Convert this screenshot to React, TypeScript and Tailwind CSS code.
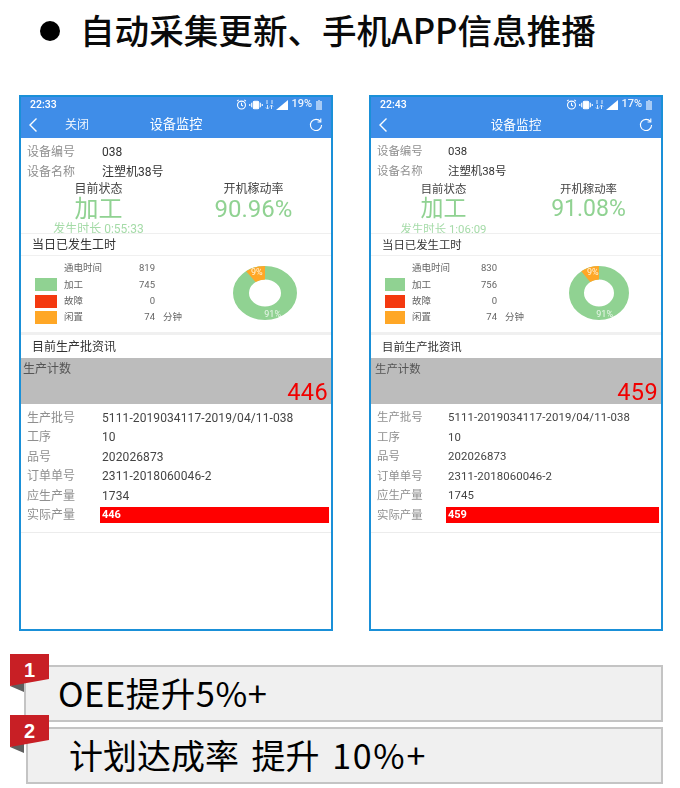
const font = "font-['Roboto','Noto_Sans_CJK_SC',sans-serif]";

type P = {
  time: string; battery: string; close: boolean; dur: string; rate: string;
  power: string; work: string; idle: string; count: string; batch: string; part: string; order: string; plan: string;
  wrap: string; sm: string; big: string; labelW: string; swatch: string; nameW: string; valW: string; chart: string; donut: string; title: string; countPad: string;
};

const a: P = {
  time: '22:33', battery: '19%', close: true, dur: '发生时长 0:55:33', rate: '90.96%',
  power: '819', work: '745', idle: '74', count: '446', batch: '5111-2019034117-2019/04/11-038', part: '202026873', order: '2311-2018060046-2', plan: '1734',
  wrap: 'w-[314px]', sm: 'text-[12px]', big: 'text-[24px]', labelW: 'w-[75px]', swatch: 'w-[22px] ml-[14px] mr-[7px]', nameW: 'w-[50px]', valW: 'w-[41px]', chart: 'ml-[51px]', donut: 'w-[64px]', title: 'text-[13.2px]', countPad: 'pl-[2px]',
};
const b: P = {
  ...a, time: '22:43', battery: '17%', close: false, dur: '发生时长 1:06:09', rate: '91.08%',
  power: '830', work: '756', count: '459', plan: '1745',
  wrap: 'w-[294px]', sm: 'text-[11.4px]', big: 'text-[23px]', labelW: 'w-[71px]', swatch: 'w-[20px] ml-[14px] mr-[7px]', nameW: 'w-[47px]', valW: 'w-[38px]', chart: 'ml-[45px]', donut: 'w-[60px]', title: 'text-[12.7px]', countPad: 'pl-[4px]',
};

function Donut({ cls }: { cls: string }) {
  return (
    <div className={`relative h-[54px] ${cls}`}>
      <svg viewBox="0 0 100 100" preserveAspectRatio="none" className="w-full h-full block">
        <circle cx="50" cy="50" r="37.5" fill="none" stroke="#90d292" strokeWidth="25" />
        <path d="M50 12.5 A37.5 37.5 0 0 0 27.9 19.7" fill="none" stroke="#ffa726" strokeWidth="25" />
      </svg>
      <span className="absolute left-[18px] top-[0px] text-[9px] leading-[12px] text-[#fff3d8]">9%</span>
      <span className="absolute right-[16px] bottom-[0px] text-[9px] leading-[11px] text-white/80">91%</span>
    </div>
  );
}

function StatusIcons({ p }: { p: P }) {
  return (
    <div className="ml-auto flex items-center gap-[2px] text-[11px] text-white/90">
      <svg width="11" height="11" viewBox="0 0 10 10" fill="none" stroke="white" strokeWidth="1"><circle cx="5" cy="5.5" r="3.6" /><path d="M5 3.5V5.7L6.4 6.4M1 2 2.4 .8M9 2 7.6 .8" /></svg>
      <svg width="14" height="10" viewBox="0 0 13 9" fill="none" stroke="white" strokeWidth="1"><rect x="4" y="1" width="5" height="7" rx="1" fill="white" /><path d="M2.5 2.5v4M10.5 2.5v4M.7 3.5v2M12.3 3.5v2" /></svg>
      <svg width="9" height="10" viewBox="0 0 9 10" fill="none" stroke="white" strokeWidth="1" opacity=".8"><path d="M1 1h2M6 1h2M1 3h2M6 3h2M2.5 5v4M1 7.5 2.5 9 4 7.5M6.500 9V5M5 6.500 6.500 5 8 6.500" /></svg>
      <svg width="12" height="10" viewBox="0 0 11 9"><path d="M0 9 11 0V9Z" fill="white" /></svg>
      <span className="font-medium ml-[1px]">{p.battery}</span>
      <svg width="6" height="10" viewBox="0 0 6 10" className="ml-[2px]"><path d="M2 0h2v1h2v9H0V1h2Z" fill="white" opacity=".55" /></svg>
    </div>
  );
}

function Row({ p, label, children }: { p: P; label: string; children: React.ReactNode }) {
  return (
    <div className={`flex items-center h-[19.5px] pl-[6px] ${p.sm}`}>
      <span className={`${p.labelW} shrink-0 text-[#8f8f8f]`}>{label}</span>
      <span className="text-[#444] flex-1 tracking-[0.1px]">{children}</span>
    </div>
  );
}

function Phone({ p }: { p: P }) {
  const rows: [string, string, string][] = [
    ['', '通电时间', p.power],
    ['bg-[#90d292]', '加工', p.work],
    ['bg-[#f4390f]', '故障', '0'],
    ['bg-[#ffa726]', '闲置', p.idle],
  ];
  return (
    <div className={`${p.wrap} h-[536px] border-2 border-[#1a90d8] bg-white flex flex-col blur-[0.35px] ${font}`}>
      <div className="bg-[#3f8de8] h-[41px] shrink-0 text-white">
        <div className="flex items-center h-[15px] pl-[9px] pr-[9px] text-[10.5px] font-medium">
          <span>{p.time}</span>
          <StatusIcons p={p} />
        </div>
        <div className="relative flex items-center h-[26px] pl-[7px] pr-[8px]">
          <svg width="10" height="16" viewBox="0 0 10 16" fill="none" stroke="white" strokeWidth="1.4"><path d="M8.500 1.500 2 8l6.500 6.500" /></svg>
          {p.close && <span className="ml-[27px] text-[12px] text-white/90">关闭</span>}
          <span className={`absolute left-0 right-0 text-center ${p.title}`}>设备监控</span>
          <svg className="ml-auto relative" width="14" height="14" viewBox="0 0 14 14" fill="none" stroke="white" strokeWidth="1.1"><path d="M11.500 3.600A5.600 5.600 0 1 0 12.600 7" /><path d="M11.800 .6V4H8.600" /></svg>
        </div>
      </div>

      <div className="pt-[4px]">
        <div className={`flex items-center h-[20px] pl-[6px] ${p.sm}`}>
          <span className={`${p.labelW} text-[#8f8f8f]`}>设备编号</span><span className="text-[#333]">038</span>
        </div>
        <div className={`flex items-center h-[20px] pl-[6px] ${p.sm}`}>
          <span className={`${p.labelW} text-[#8f8f8f]`}>设备名称</span><span className="text-[#333]">注塑机38号</span>
        </div>
        <div className="grid grid-cols-2 text-center">
          <div>
            <div className={`h-[15px] leading-[15px] ${p.sm} text-[#444]`}>目前状态</div>
            <div className={`h-[24px] leading-[24px] ${p.big} text-[#90d292]`}>加工</div>
            <div className={`h-[11px] leading-[17px] ${p.sm} text-[#a5dba8] whitespace-nowrap`}>{p.dur}</div>
          </div>
          <div>
            <div className={`h-[15px] leading-[15px] ${p.sm} text-[#444]`}>开机稼动率</div>
            <div className={`h-[24px] leading-[24px] ${p.big} text-[#90d292]`}>{p.rate}</div>
          </div>
        </div>
      </div>

      <div className="h-[1px] bg-[#efefef] mt-[1px]" />
      <div className={`h-[22px] leading-[22px] pl-[11px] ${p.sm} text-[#333] border-b border-[#f0f0f0]`}>当日已发生工时</div>

      <div className="flex items-center h-[74px] mb-[2px]">
        <div className="flex flex-col">
          {rows.map(([c, n, v], i) => (
            <div key={n} className="flex items-center h-[16.3px] text-[9.5px] text-[#666]">
              <span className={`${p.swatch} h-[13px] shrink-0 ${c}`} />
              <span className={p.nameW}>{n}</span>
              <span className={`${p.valW} text-right`}>{v}</span>
              {i === 3 && <span className="ml-[8px]">分钟</span>}
            </div>
          ))}
        </div>
        <div className={p.chart}><Donut cls={p.donut} /></div>
      </div>

      <div className="h-[3px] bg-[#f0f0f0]" />
      <div className={`h-[23px] pt-[1px] leading-[22px] pl-[11px] ${p.sm} text-[#333]`}>目前生产批资讯</div>

      <div className={`h-[46px] bg-[#bcbcbc] flex flex-col pr-[3px] ${p.countPad}`}>
        <div className={`h-[22px] leading-[22px] ${p.sm} text-[#555]`}>生产计数</div>
        <div className="text-right text-[23.5px] leading-[25px] text-[#f00000] tracking-[0.4px]">{p.count}</div>
      </div>

      <div className="pt-[4px]">
        <Row p={p} label="生产批号">{p.batch}</Row>
        <Row p={p} label="工序">10</Row>
        <Row p={p} label="品号">{p.part}</Row>
        <Row p={p} label="订单单号">{p.order}</Row>
        <Row p={p} label="应生产量">{p.plan}</Row>
        <div className={`flex items-center h-[19.5px] pl-[6px] pr-[2px] ${p.sm}`}>
          <span className={`${p.labelW} shrink-0 text-[#8f8f8f] -mr-[2px]`}>实际产量</span>
          <span className="flex-1 h-[16px] leading-[16px] bg-[#ff0000] text-white font-bold pl-[2px] text-[11px]">{p.count}</span>
        </div>
      </div>
      <div className="h-[1px] bg-[#ececec] mt-[7px]" />
    </div>
  );
}

function Ribbon({ n, pos }: { n: string; pos: string }) {
  return (
    <div className={`absolute w-[39px] h-[39px] ${pos}`}>
      <svg width="39" height="39" viewBox="0 0 39 39" className="block">
        <path d="M0 32 14 38V26Z" fill="#5f5f5f" />
        <path d="M0 0H39V25L0 32Z" fill="#c81f25" />
      </svg>
      <span className="absolute left-0 right-0 top-[3px] text-center text-white font-bold text-[20px] leading-[26px] font-['Liberation_Sans',sans-serif]">{n}</span>
    </div>
  );
}

export default function App() {
  const cjk = "font-['Noto_Sans_CJK_SC',sans-serif]";
  return (
    <div className={`w-[680px] h-[788px] bg-white overflow-hidden ${cjk}`}>
      <div className="flex items-center h-[60px] pl-[40px]">
        <span className="w-[20px] h-[20px] rounded-full bg-black mr-[20px] mt-[2px]" />
        <span className="text-[34.6px] font-medium text-[#0a0a0a] whitespace-nowrap">自动采集更新、手机APP信息推播</span>
      </div>
      <div className="flex pl-[19px] gap-[36px] mt-[35px]">
        <Phone p={a} />
        <Phone p={b} />
      </div>
      <div className="relative ml-[24px] w-[639px] h-[57px] mt-[34px] bg-[#f0f0f0] border-2 border-[#c4c4c4] flex items-center pl-[32px]">
        <Ribbon n="1" pos="left-[-16px] top-[-13px]" />
        <span className="text-[34.5px] tracking-[0.5px] text-black whitespace-nowrap -mt-[2px]">OEE提升5%+</span>
      </div>
      <div className="relative ml-[26px] w-[637px] h-[57px] mt-[5px] bg-[#f0f0f0] border-2 border-[#c4c4c4] flex items-center pl-[41px]">
        <Ribbon n="2" pos="left-[-18px] top-[-14px]" />
        <span className="text-[34px] [word-spacing:5px] text-black whitespace-nowrap -mt-[2px]">计划达成率 提升 <span className="tracking-[1.7px]">10%+</span></span>
      </div>
    </div>
  );
}
